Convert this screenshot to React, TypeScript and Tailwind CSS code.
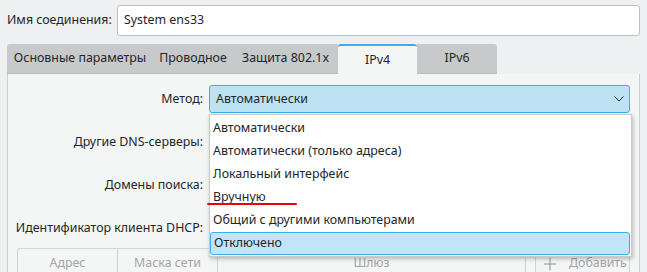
import { Plus } from 'lucide-react';

const tabs = [
  { name: 'Основные параметры', w: 'w-[146px]' },
  { name: 'Проводное', w: 'w-[80px]' },
  { name: 'Защита 802.1x', w: 'w-[105px]' },
  { name: 'IPv4', w: 'w-[79px]', active: true },
  { name: 'IPv6', w: 'w-[80px]' },
];

const methods = [
  'Автоматически',
  'Автоматически (только адреса)',
  'Локальный интерфейс',
  'Вручную',
  'Общий с другими компьютерами',
  'Отключено',
];

function Chevron() {
  return (
    <svg width="10" height="6" viewBox="0 0 10 6" className="text-[#232629]">
      <path d="M0.5 0.5 L5 5 L9.5 0.5" fill="none" stroke="currentColor" strokeWidth="1" />
    </svg>
  );
}

export default function App() {
  return (
    <div
      className="relative w-[647px] h-[272px] overflow-hidden bg-[#eff0f1] text-[12.4px] text-[#232629] whitespace-nowrap"
      style={{ fontFamily: '"Noto Sans", "Open Sans", sans-serif' }}
    >
      <div className="flex items-center pl-[7px] pr-[7px] pt-[5px]">
        <span className="w-[110px] shrink-0">Имя соединения:</span>
        <div className="flex-1 h-[31px] flex items-center px-[6px] bg-white border border-[#bcbebf] rounded-[3px]">
          System ens33
        </div>
      </div>

      <div className="flex mt-[8px] ml-[7px] h-[30px]">
        {tabs.map((t, i) =>
          t.active ? (
            <div
              key={t.name}
              className={`${t.w} flex items-center justify-center bg-[#f4f5f5] border-t-2 border-[#3daee9] rounded-t-[3px]`}
            >
              {t.name}
            </div>
          ) : (
            <div
              key={t.name}
              className={`${t.w} flex items-center justify-center bg-[#c8c9ca] border-b border-[#b9babb] ${i === 0 ? 'rounded-tl-[3px]' : ''} ${i === tabs.length - 1 ? 'rounded-tr-[3px]' : ''}`}
            >
              {t.name}
            </div>
          )
        )}
      </div>

      <div className="ml-[7px] mr-[7px] h-[220px] bg-[#f4f5f5] border-l border-r border-[#cdcecf] pt-[11px] pl-[9px] pr-[9px]">
        <div className="grid grid-cols-[186px_1fr] gap-x-[6px]">
          <div className="h-[28px] flex items-center justify-end">Метод:</div>
          <div className="h-[28px] flex items-center justify-between pl-[6px] pr-[5px] bg-[#bde2f4] border border-[#3daee9] rounded-[3px]">
            <span>Автоматически</span>
            <Chevron />
          </div>
          <div className="h-[30px] mt-[14px] flex items-center justify-end">Другие DNS-серверы:</div>
          <div className="mt-[14px]" />
          <div className="h-[30px] mt-[13px] flex items-center justify-end">Домены поиска:</div>
          <div className="mt-[13px]" />
          <div className="h-[30px] mt-[13px] flex items-center justify-end">Идентификатор клиента DHCP:</div>
          <div className="mt-[13px]" />
        </div>

        <div className="flex mt-[5px] h-[30px] text-[#a4a6a8]">
          <div className="flex-1 flex border-t border-l border-r border-[#d3d4d5] rounded-t-[3px] h-[30px]">
            <div className="w-[100px] flex items-center justify-center border-r border-[#d3d4d5]">Адрес</div>
            <div className="w-[100px] flex items-center justify-center border-r border-[#d3d4d5]">Маска сети</div>
            <div className="flex-1 flex items-center justify-center">Шлюз</div>
          </div>
          <div className="ml-[9px] w-[95px] flex items-center gap-[9px] pl-[4px] border-t border-l border-r border-[#d3d4d5] rounded-t-[3px]">
            <Plus size={20} strokeWidth={1} className="text-[#7b7e81]" />
            <span>Добавить</span>
          </div>
        </div>
      </div>

      <div className="absolute left-[209px] top-[114px] w-[423px] h-[143px] bg-white border border-[#c8c9ca] shadow-[1px_2px_4px_rgba(0,0,0,0.25)] pt-[2px]">
        {methods.map((m, i) => (
          <div
            key={m}
            className={`h-[23px] flex items-center pl-[3px] ${i === methods.length - 1 ? 'bg-[#c3e4f6] border border-[#3daee9] rounded-[3px] mr-[1px]' : ''}`}
          >
            {m}
          </div>
        ))}
      </div>

      <div className="absolute left-[207px] top-[203px] w-[90px] h-[2px] bg-[#e8000b] rounded-full" />
    </div>
  );
}
